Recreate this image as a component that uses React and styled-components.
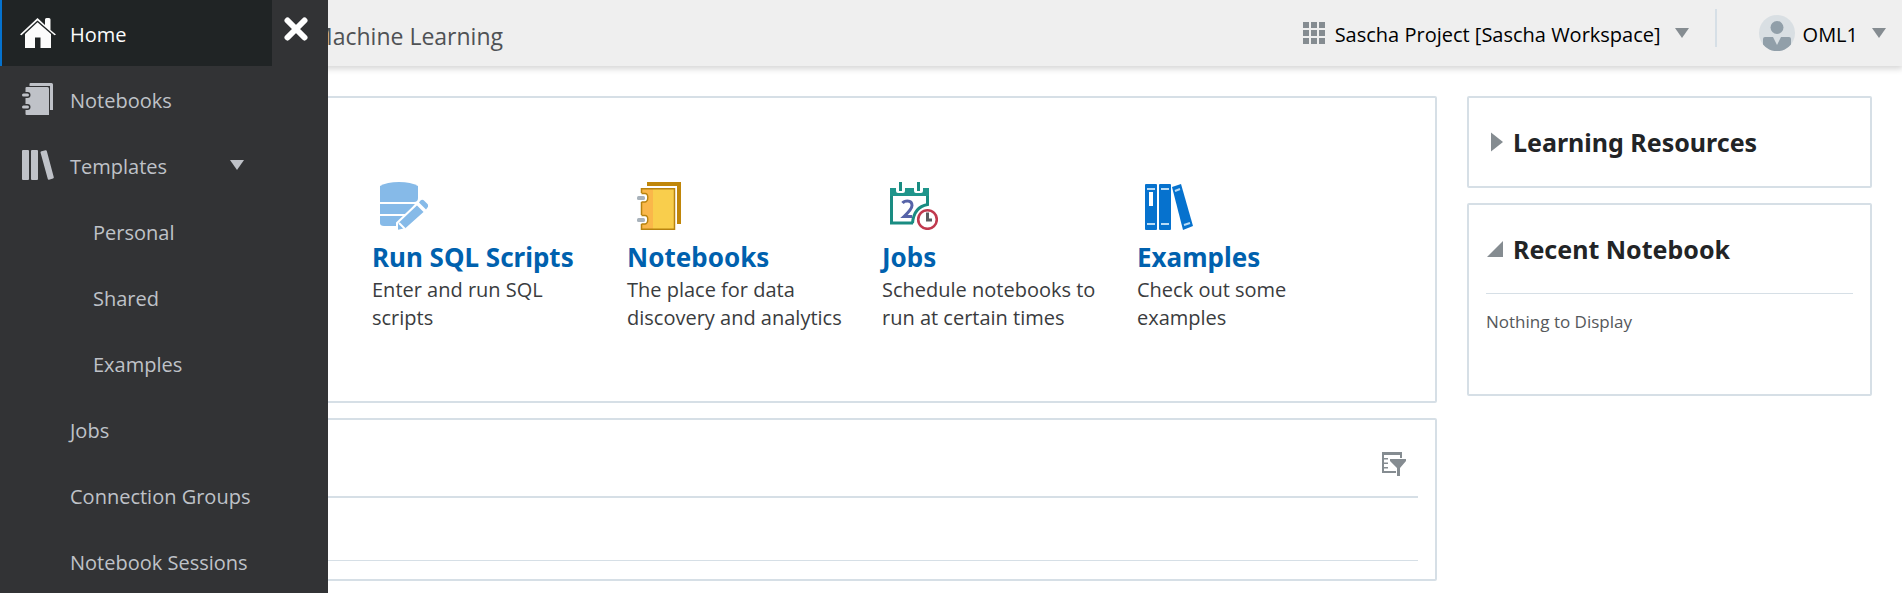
import React, { useState } from "react";
import styled, { createGlobalStyle } from "styled-components";

const line = "#d6dfe6";
const glyph = "#858c91";

const GlobalStyle = createGlobalStyle`
  * { box-sizing: border-box; }
  body {
    margin: 0;
    background: #fff;
    color: #3a3c3e;
    font-family: "Segoe UI", "Open Sans", "Noto Sans", sans-serif;
    font-size: 20px;
  }
  h1, h2, p, ul { margin: 0; padding: 0; }
  button { font: inherit; color: inherit; background: none; border: 0; padding: 0; cursor: pointer; }
  svg { display: block; flex: none; }
`;

const Page = styled.div`
  position: relative;
  min-height: 100vh;
  overflow-x: hidden;
`;

const Sidebar = styled.aside`
  position: absolute;
  inset: 0 auto 0 0;
  z-index: 2;
  width: 328px;
  display: flex;
  align-items: flex-start;
  background: #323335;
  overflow: hidden;
`;

const Nav = styled.nav`
  width: 272px;
`;

const NavList = styled.ul`
  list-style: none;
`;

const NavLink = styled.a`
  display: flex;
  align-items: center;
  height: 66px;
  padding-left: ${(p) => (p.$nested ? 91 : 18)}px;
  border-left: 2px solid ${(p) => (p.$active ? "#0572ce" : "transparent")};
  background: ${(p) => (p.$active ? "#202425" : "transparent")};
  color: ${(p) => (p.$active ? "#fcfcfc" : "#bfc2c8")};
  text-decoration: none;
  white-space: nowrap;
`;

const NavIcon = styled.span`
  width: 36px;
  margin-right: 14px;
`;

const NavLabel = styled.span`
  flex: 1;
  padding-top: 2px;
`;

const NavCaret = styled.span`
  padding-right: 28px;
`;

const CloseButton = styled.button`
  width: 56px;
  padding: 17px 0 0 12px;
`;

const Header = styled.header`
  position: relative;
  z-index: 1;
  display: flex;
  align-items: center;
  height: 66px;
  padding: 0 16px 0 312px;
  background: #efefef;
  box-shadow: 0 2px 6px 1px rgba(0, 0, 0, 0.16);
`;

const Brand = styled.h1`
  flex: 1;
  padding-top: 6px;
  font-size: 23px;
  font-weight: 400;
  color: #4f5255;
`;

const HeaderButton = styled.button`
  display: flex;
  align-items: center;
  color: #000;
  white-space: nowrap;
`;

const HeaderLabel = styled.span`
  margin: 0 14px 0 ${(p) => p.$before}px;
  padding-top: 2px;
`;

const Separator = styled.span`
  align-self: flex-start;
  width: 2px;
  height: 38px;
  margin: 9px 42px 0 26px;
  background: ${line};
`;

const Content = styled.main`
  display: grid;
  grid-template-columns: minmax(0, 1fr) 405px;
  gap: 30px;
  padding: 30px 30px 12px;
`;

const Column = styled.div`
  display: flex;
  flex-direction: column;
  gap: 15px;
`;

const Panel = styled.section`
  border: 2px solid ${line};
  border-radius: 2px;
`;

const QuickActions = styled(Panel)`
  display: flex;
  gap: 30px;
  padding: 84px 16px 69px 340px;
`;

const Action = styled.a`
  width: 225px;
  text-decoration: none;
  color: inherit;
`;

const ActionIcon = styled.span`
  display: block;
  padding-left: 8px;
`;

const ActionTitle = styled.h2`
  margin-top: 8px;
  font-family: "Segoe UI", "Noto Sans", sans-serif;
  font-size: 26px;
  line-height: 38px;
  color: #0061ae;
  white-space: nowrap;
`;

const ActionText = styled.p`
  line-height: 28px;
`;

const Activity = styled(Panel)`
  padding: 0 17px 18px;
`;

const ActivityBar = styled.div`
  display: flex;
  align-items: center;
  justify-content: flex-end;
  height: 78px;
  padding: 14px 12px 3px 0;
  border-bottom: 2px solid ${line};
`;

const ActivityRow = styled.div`
  height: 63px;
  border-bottom: 1px solid ${line};
`;

const SideCard = styled(Panel)`
  padding: 0 17px;
`;

const SideHead = styled.h2`
  height: 88px;
  display: flex;
  font-family: "Segoe UI", "Noto Sans", sans-serif;
  font-size: 25px;
  color: #222426;
`;

const SideToggle = styled.button`
  display: flex;
  align-items: center;
  gap: 10px;
  font-weight: 700;
`;

const SideBody = styled.p`
  height: 101px;
  padding-top: 17px;
  border-top: 1px solid ${line};
  font-size: 17px;
  line-height: 22px;
  color: #55585b;
`;

const HomeIcon = () => (
  <svg width="36" height="30" viewBox="0 0 36 30" fill="#fcfcfc">
    <path d="M17.500 0 25 7V1.500Q25 0 26.500 0H29Q30.500 0 30.500 1.500V12L36 16.500 34.500 17.200 17.500 2.500 1.500 17.200 0 16.500Z" />
    <path d="M17.500 4.300 31 16V30H20.500V19.500H15V30H5V16Z" />
  </svg>
);

const NotebookIcon = () => (
  <svg width="36" height="32" viewBox="0 0 36 32" fill="#bfc2c8">
    <path d="M10.500 0H31.500Q33 0 33 1.500V27H30V3H9.500V1Q9.500 0 10.500 0Z" />
    <path d="M6.500 4H27.500Q29 4 29 5.500V32H6.500Q5.500 32 5.500 31V5Q5.500 4 6.500 4Z" />
    <rect x="1" y="9" width="9.500" height="6" rx="3" fill="#323335" />
    <rect x="1" y="21" width="9.500" height="6" rx="3" fill="#323335" />
    <rect x="2" y="10.500" width="7" height="3" rx="1.500" />
    <rect x="2" y="22.500" width="7" height="3" rx="1.500" />
  </svg>
);

const TemplatesIcon = () => (
  <svg width="36" height="30" viewBox="0 0 36 30" fill="#bfc2c8">
    <rect x="2" width="7" height="30" rx="1" />
    <rect x="11" width="7" height="30" rx="1" />
    <path d="M21.500 1.200 25.500 0.200Q26.500 0 26.800 1L33.800 27.300Q34 28.300 33 28.600L29 29.800Q28 30 27.800 29L20.500 2.500Q20.300 1.500 21.500 1.200Z" />
  </svg>
);

const CaretDown = ({ color }) => (
  <svg width="14" height="10" viewBox="0 0 14 10" fill={color}>
    <path d="M0 0H14L7 10Z" />
  </svg>
);

const CloseIcon = () => (
  <svg width="24" height="24" viewBox="0 0 24 24" stroke="#fff" strokeWidth="6" strokeLinecap="round">
    <path d="M3.500 3.500 20.500 20.500M20.500 3.500 3.500 20.500" />
  </svg>
);

const GridIcon = () => (
  <svg width="22" height="22" viewBox="0 0 22 22" fill={glyph}>
    {[0, 8, 16].map((y) => [0, 8, 16].map((x) => <rect key={`${x}-${y}`} x={x} y={y} width="6" height="6" />))}
  </svg>
);

const Avatar = () => (
  <svg width="36" height="36" viewBox="0 0 36 36">
    <circle cx="18" cy="18" r="18" fill="#d9dfe3" />
    <circle cx="18" cy="12.500" r="6.500" fill="#919fa9" />
    <path d="M4 24Q4 22 6 22H14L18 30 22 22H30Q32 22 32 24V29.500A18 18 0 0 1 4 29.500Z" fill="#919fa9" />
  </svg>
);

const ScriptsIcon = () => (
  <svg width="48" height="48" viewBox="0 0 48 48">
    <g fill="#86bae8">
      <path d="M0 4Q7 0 19 0T38 4V16Q38 20 34 20H0Z" />
      <path d="M0 22H35L27 32H0Z" />
      <path d="M0 34H25L18 42 16 44H4Q0 44 0 41Z" />
    </g>
    <path d="M37 22 45 30 26 47 17 49 17 41Z" fill="#86bae8" stroke="#fff" strokeWidth="2" />
    <path d="M39 20.500 40.500 18.500Q42.500 17 44.500 19L47.500 22Q49 24 47.500 25.500L46 27.500Z" fill="#86bae8" />
    <path d="M19 41 25 47" stroke="#fff" strokeWidth="2" />
  </svg>
);

const NotebooksIcon = () => (
  <svg width="48" height="48" viewBox="0 0 48 48">
    <path d="M12 0H46V42H42V4H12Z" fill="#c08609" />
    <rect x="7" y="7" width="33" height="40" fill="#f9ce4c" />
    <rect x="7" y="7" width="11" height="40" fill="#fab74a" />
    <path d="M6.500 11V6.700H39.500V47.300H6.500V42M6.500 20V33" fill="none" stroke="#b8830f" strokeWidth="1.500" />
    <path d="M5 11.500H10.500Q12.500 11.500 12.500 15.500T10.500 20H5ZM5 33.500H10.500Q12.500 33.500 12.500 37.500T10.500 42H5Z" fill="#fff" />
    <path d="M6.500 11.500H10Q12.800 11.500 12.800 15.500T10 20H6.500M6.500 33.500H10Q12.800 33.500 12.800 37.500T10 42H6.500" fill="none" stroke="#b8830f" strokeWidth="1.400" />
    <rect x="2" y="14" width="8" height="4" rx="1.500" fill="#a8b2bb" />
    <rect x="2" y="36" width="8" height="4" rx="1.500" fill="#a8b2bb" />
  </svg>
);

const JobsIcon = () => (
  <svg width="48" height="48" viewBox="0 0 48 48" fill="none">
    <path d="M1.500 8V41H23M37.500 8V22.500Q24 25 22.500 41" stroke="#1a8c82" strokeWidth="3" />
    <path d="M0 6H6V9Q6 11 8 11H13Q15 11 15 9V6H24V9Q24 11 26 11H31Q33 11 33 9V6H39V14H0Z" fill="#1f958b" />
    <path d="M10.500 0V9M28.500 0V9" stroke="#1a8c82" strokeWidth="3" />
    <path d="M12.500 21Q14 19 17.500 19 22 19 22 23.500 22 27 14 34.500H22" stroke="#5663a8" strokeWidth="3" />
    <circle cx="37.500" cy="37.500" r="9.300" fill="#fff" stroke="#c0394e" strokeWidth="2.600" />
    <path d="M37.500 30.500V38H42" stroke="#5a5d60" strokeWidth="3" />
  </svg>
);

const ExamplesIcon = () => (
  <svg width="48" height="48" viewBox="0 0 48 48" fill="#0672ce">
    <rect y="2" width="12" height="46" rx="1" />
    <rect x="14" y="2" width="12" height="46" rx="1" />
    <path d="M27 5 36 2 48 44 38 48Z" />
    <path d="M2 7H10M2 42H10M16 7H24M16 42H24M30 9 35 7M39 43 45 41" stroke="#b9dcf6" strokeWidth="2" />
    <rect x="4" y="10" width="4" height="14" fill="#fff" />
  </svg>
);

const FilterIcon = () => (
  <svg width="24" height="24" viewBox="0 0 24 24" fill={glyph}>
    <path d="M0 0H20V6H18V3H2V19H14V21H0Z" />
    <path d="M2 6H6V7.500H2ZM2 10.500H6V12H2ZM2 15H6V16.500H2Z" />
    <path d="M8 7H24V9L18 16V24H15V16L8 9Z" />
  </svg>
);

const Disclosure = ({ open }) => (
  <svg width="17" height="20" viewBox="0 0 17 20" fill={glyph}>
    {open ? <path d="M17 2V18H1Z" /> : <path d="M5 0.500 17 10 5 19.500Z" />}
  </svg>
);

const navItems = [
  { label: "Home", icon: <HomeIcon />, active: true },
  { label: "Notebooks", icon: <NotebookIcon /> },
  { label: "Templates", icon: <TemplatesIcon />, caret: true },
  { label: "Personal", nested: true },
  { label: "Shared", nested: true },
  { label: "Examples", nested: true },
  { label: "Jobs" },
  { label: "Connection Groups" },
  { label: "Notebook Sessions" },
];

const actions = [
  { title: "Run SQL Scripts", text: "Enter and run SQL scripts", icon: <ScriptsIcon /> },
  { title: "Notebooks", text: "The place for data discovery and analytics", icon: <NotebooksIcon /> },
  { title: "Jobs", text: "Schedule notebooks to run at certain times", icon: <JobsIcon /> },
  { title: "Examples", text: "Check out some examples", icon: <ExamplesIcon /> },
];

function CollapsibleCard({ title, startOpen, children }) {
  const [open, setOpen] = useState(Boolean(startOpen));
  return (
    <SideCard>
      <SideHead>
        <SideToggle type="button" aria-expanded={open} onClick={() => setOpen(!open)}>
          <Disclosure open={open} />
          {title}
        </SideToggle>
      </SideHead>
      {open && children && <SideBody>{children}</SideBody>}
    </SideCard>
  );
}

export default function App() {
  return (
    <Page>
      <GlobalStyle />
      <Sidebar>
        <Nav>
          <NavList>
            {navItems.map((item) => (
              <li key={item.label}>
                <NavLink href="#" $active={item.active} $nested={item.nested}>
                  {!item.nested && <NavIcon>{item.icon}</NavIcon>}
                  <NavLabel>{item.label}</NavLabel>
                  {item.caret && (
                    <NavCaret>
                      <CaretDown color="#bfc2c8" />
                    </NavCaret>
                  )}
                </NavLink>
              </li>
            ))}
          </NavList>
        </Nav>
        <CloseButton type="button" aria-label="Close menu">
          <CloseIcon />
        </CloseButton>
      </Sidebar>

      <Header>
        <Brand>Machine Learning</Brand>
        <HeaderButton type="button">
          <GridIcon />
          <HeaderLabel $before={10}>Sascha Project [Sascha Workspace]</HeaderLabel>
          <CaretDown color={glyph} />
        </HeaderButton>
        <Separator />
        <HeaderButton type="button">
          <Avatar />
          <HeaderLabel $before={8}>OML1</HeaderLabel>
          <CaretDown color={glyph} />
        </HeaderButton>
      </Header>

      <Content>
        <Column>
          <QuickActions>
            {actions.map((action) => (
              <Action href="#" key={action.title}>
                <ActionIcon>{action.icon}</ActionIcon>
                <ActionTitle>{action.title}</ActionTitle>
                <ActionText>{action.text}</ActionText>
              </Action>
            ))}
          </QuickActions>
          <Activity>
            <ActivityBar>
              <button type="button" aria-label="Filter">
                <FilterIcon />
              </button>
            </ActivityBar>
            <ActivityRow />
          </Activity>
        </Column>
        <Column>
          <CollapsibleCard title="Learning Resources" />
          <CollapsibleCard title="Recent Notebook" startOpen>
            Nothing to Display
          </CollapsibleCard>
        </Column>
      </Content>
    </Page>
  );
}
